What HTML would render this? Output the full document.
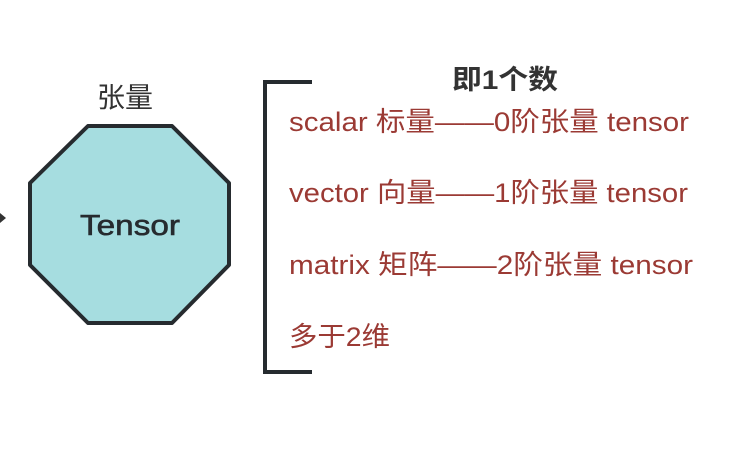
<!DOCTYPE html><html><head><style>html,body{margin:0;background:#fff;width:742px;height:456px;overflow:hidden}</style></head><body>
<svg width="742" height="456" xmlns="http://www.w3.org/2000/svg" style="font-family:'Liberation Sans','Noto Sans CJK SC',sans-serif">
<polygon points="88,126 172,126 229,183 229,265 172,323 88,323 30,265 30,183" fill="#a6dde0" stroke="#262b2f" stroke-width="4" stroke-linejoin="round"/>
<path d="M0,213 L6,218 L0,223 Z" fill="#333"/>
<text x="125" y="107" font-size="28" fill="#333" text-anchor="middle">张量</text>
<text x="130" y="235" font-size="29" fill="#262b2f" stroke="#262b2f" stroke-width="0.6" text-anchor="middle" textLength="100" lengthAdjust="spacingAndGlyphs">Tensor</text>
<path d="M312,82 L265,82 L265,372 L312,372" fill="none" stroke="#262b2f" stroke-width="4"/>
<text x="505" y="89" font-size="27" font-weight="bold" fill="#333" text-anchor="middle" textLength="106" lengthAdjust="spacingAndGlyphs">即1个数</text>
<g font-size="27" fill="#9b3a34">
<text x="289" y="131" textLength="400" lengthAdjust="spacingAndGlyphs">scalar 标量——0阶张量 tensor</text>
<text x="289" y="202" textLength="399" lengthAdjust="spacingAndGlyphs">vector 向量——1阶张量 tensor</text>
<text x="289" y="274" textLength="404" lengthAdjust="spacingAndGlyphs">matrix 矩阵——2阶张量 tensor</text>
<text x="289" y="346" textLength="101" lengthAdjust="spacingAndGlyphs">多于2维</text>
</g>
</svg>
</body></html>
